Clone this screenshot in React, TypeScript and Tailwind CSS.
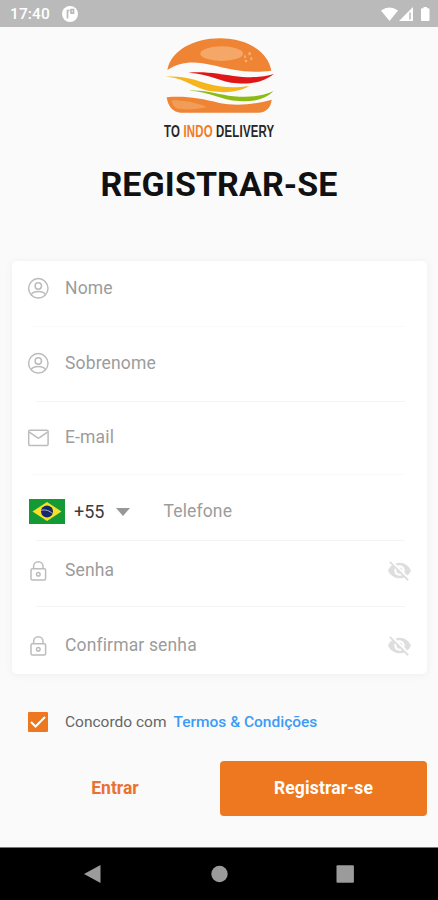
import type { ReactNode } from "react";

const UserIcon = () => (
  <svg width="22" height="22" viewBox="0 0 22 22" fill="none" stroke="#bcbcbc" strokeWidth="1.5">
    <circle cx="11.300" cy="11.300" r="9.700" />
    <circle cx="11.300" cy="9" r="3.2" />
    <path d="M4.300 17.800c1-2.500 3.600-3.200 7-3.200s6 .7 7 3.200" />
  </svg>
);

const MailIcon = () => (
  <svg width="22" height="22" viewBox="0 0 22 22" fill="none" stroke="#bcbcbc" strokeWidth="1.5">
    <rect x="1.700" y="4.200" width="19.400" height="15.200" rx="1.2" />
    <path d="M2.300 6.100l8 5.600q1.100.8 2.200 0l8-5.600" />
  </svg>
);

const LockIcon = () => (
  <svg width="22" height="22" viewBox="0 0 22 22" fill="none" stroke="#bcbcbc" strokeWidth="1.5">
    <rect x="4" y="8.800" width="14.600" height="11.200" rx="1.5" />
    <path d="M6.600 8.800V6.400a4.700 4.700 0 0 1 9.400 0v2.400" />
    <circle cx="11.300" cy="14.2" r="1.8" />
  </svg>
);

const EyeOffIcon = () => (
  <svg width="25" height="25" viewBox="0 0 24 24" fill="#dedede">
    <path d="M12 7c2.76 0 5 2.24 5 5 0 .65-.13 1.26-.36 1.83l2.92 2.92c1.51-1.26 2.7-2.89 3.43-4.75-1.73-4.39-6-7.5-11-7.5-1.4 0-2.74.25-3.98.7l2.16 2.16C10.74 7.13 11.35 7 12 7zM2 4.27l2.28 2.28.46.46A11.8 11.8 0 0 0 1 12c1.73 4.39 6 7.5 11 7.5 1.55 0 3.03-.3 4.38-.84l.42.42L19.73 22 21 20.73 3.27 3 2 4.27zM7.53 9.8l1.55 1.55c-.05.21-.08.43-.08.65 0 1.66 1.34 3 3 3 .22 0 .44-.03.65-.08l1.55 1.55c-.67.33-1.41.53-2.2.53-2.76 0-5-2.24-5-5 0-.79.2-1.53.53-2.2zm4.31-.78l3.15 3.15.02-.16c0-1.66-1.34-3-3-3l-.17.01z" />
  </svg>
);

const Flag = () => (
  <svg width="36" height="25" viewBox="0 0 36 25">
    <rect width="36" height="25" fill="#149a35" />
    <path d="M3.500 12.500L18 3l14.500 9.500L18 22z" fill="#f8e02a" />
    <circle cx="18" cy="12.500" r="6" fill="#16296b" />
    <path d="M12.300 11.300c4-1 8.500.3 11.200 3.400" fill="none" stroke="#a9bdd8" strokeWidth="1" />
  </svg>
);

const Logo = () => (
  <svg width="130" height="115" viewBox="0 0 390 345" role="img">
    <path d="M37 120C48 62 115 25 195 25c84 0 145 42 154 97-70 9-118-2-174-16-56-13-96-13-138 14z" fill="#ee8434" />
    <ellipse cx="200" cy="71" rx="64" ry="22" fill="#f5a767" />
    <g fill="#f6b27c">
      <ellipse cx="284" cy="71" rx="4" ry="5" />
      <ellipse cx="270" cy="80" rx="3" ry="4" />
      <ellipse cx="289" cy="86" rx="3" ry="5" />
      <ellipse cx="273" cy="93" rx="4" ry="4" />
    </g>
    <path d="M100 128c60-4 95 5 135 10 50 6 84 5 122-6-29 22-65 32-110 28-51-3-83-29-147-32z" fill="#df1718" />
    <path d="M31 140c56-4 89 10 130 22 45 12 78 12 122 6-29 17-67 22-113 16-54-9-82-42-139-44z" fill="#f6b51d" />
    <path d="M102 182c54-3 91 13 133 17 47 4 83 1 121-16-25 25-60 33-104 30-55-3-91-29-150-31z" fill="#8dbb16" />
    <path d="M35 202c55-5 102 3 158 17 54 10 105 4 157-10-2 23-16 38-40 39H77c-25-1-38-20-42-46z" fill="#ee8434" />
    <path d="M50 211c37 0 72 6 105 20-30 9-71 9-91 4-8-4-12-14-14-24z" fill="#f29d57" />
    <text
      transform="translate(27 320) scale(.7 1)"
      fontFamily="'Liberation Sans', sans-serif"
      fontWeight="700"
      fontSize="49"
      textLength="472"
      fill="#262626"
    >
      TO <tspan fill="#f07a25">INDO</tspan> DELIVERY
    </text>
  </svg>
);

const StatusBar = () => (
  <header className="flex h-[27px] shrink-0 items-center bg-[#bababa] pt-px pl-[10px] pr-[8px] text-white">
    <span className="pt-px text-[15.500px] font-medium leading-none tracking-[0.1px]">17:40</span>
    <svg className="ml-3" width="16" height="16" viewBox="0 0 16 16">
      <circle cx="8" cy="8" r="8" fill="#fff" />
      <path d="M5.500 12.500V4.500H7.500M9 3.700h2.500v3.500H9z" fill="none" stroke="#bababa" strokeWidth="1.700" />
    </svg>
    <svg className="ml-auto" width="50" height="16" viewBox="0 0 50 16" fill="#fff">
      <path d="M1 4.500Q9.500-1.500 18 4.500L9.500 15z" />
      <path d="M33 1v14H19z" />
      <path d="M30 6.500v7" stroke="#bababa" strokeWidth="1.500" />
      <path d="M43.500 1h3.500v1.200h1.500q1 0 1 1V14q0 1-1 1h-6.500q-1 0-1-1V3.200q0-1 1-1h1.500z" />
    </svg>
  </header>
);

type FieldProps = {
  icon: ReactNode;
  label: string;
  className: string;
  secret?: boolean;
};

const Field = ({ icon, label, className, secret }: FieldProps) => (
  <div className={`flex items-center pl-[15px] pr-[15px] ${className}`}>
    {icon}
    <span className="ml-4 text-[17.500px] tracking-[0.15px] text-[#9c9c9c]">{label}</span>
    {secret && (
      <span className="ml-auto">
        <EyeOffIcon />
      </span>
    )}
  </div>
);

const Divider = ({ faint }: { faint?: boolean }) => (
  <div className={`mr-[22px] h-px ${faint ? "ml-[18px] bg-[#fafafa]" : "ml-6 bg-[#f4f4f4]"}`} />
);

export default function App() {
  return (
    <div className="flex h-[900px] w-[438px] flex-col overflow-hidden bg-[#fafafa] font-['Roboto',sans-serif]">
      <StatusBar />

      <main className="flex flex-1 flex-col">
        <div className="flex justify-center pl-[2px] pt-[3px]">
          <Logo />
        </div>
        <h1 className="mt-[19px] text-center text-[34px] font-bold leading-10 tracking-[0.1px] text-[#111]">
          REGISTRAR-SE
        </h1>

        <section className="ml-3 mr-[11px] mt-[57px] rounded-[5px] bg-white shadow-[0_1px_10px_rgba(0,0,0,0.05)]">
          <Field icon={<UserIcon />} label="Nome" className="h-[65px] pb-[11px]" />
          <Divider faint />
          <Field icon={<UserIcon />} label="Sobrenome" className="h-[74px] pb-[2px]" />
          <Divider />
          <Field icon={<MailIcon />} label="E-mail" className="h-[72px] pb-[2px]" />
          <Divider faint />
          <div className="flex h-[65px] items-center pl-[17px] pt-[8px]">
            <Flag />
            <span className="ml-[9px] text-[18px] text-[#3c3c3c]">+55</span>
            <svg className="ml-3" width="14" height="8" viewBox="0 0 14 8">
              <path d="M0 0h14L7 8z" fill="#989898" />
            </svg>
            <span className="ml-[33px] text-[17.500px] tracking-[0.15px] text-[#9c9c9c]">Telefone</span>
          </div>
          <Divider />
          <Field icon={<LockIcon />} label="Senha" className="h-[65px] pb-[6px]" secret />
          <Divider />
          <Field icon={<LockIcon />} label="Confirmar senha" className="h-[67px] pt-[10px]" secret />
        </section>

        <div className="mt-[38px] flex h-5 items-center pl-7">
          <span className="flex size-5 items-center justify-center rounded-[1px] bg-[#ee7820]">
            <svg width="16" height="12" viewBox="0 0 16 12" fill="none" stroke="#fff" strokeWidth="2">
              <path d="M1 6l4.500 4.500L15 1" />
            </svg>
          </span>
          <span className="ml-[17px] pt-[2px] text-[15.500px] text-[#666]">Concordo com</span>
          <a href="#" className="ml-[7px] pt-[2px] text-[15.500px] font-medium text-[#3d9bf5]">
            Termos &amp; Condições
          </a>
        </div>

        <div className="mt-[29px] flex px-[11px]">
          <button className="h-[55px] w-[209px] pr-px text-[17.500px] font-bold text-[#eb7130]">Entrar</button>
          <button className="h-[55px] flex-1 rounded-[4px] bg-[#ee7820] text-[17.500px] font-bold tracking-[0.15px] text-white">
            Registrar-se
          </button>
        </div>
      </main>

      <nav className="flex h-[53px] shrink-0 items-center border-t border-[#777] bg-black pl-[83px]">
        <svg width="272" height="18" viewBox="0 0 272 18" fill="#9b9b9b">
          <path d="M1 9L17.500 0v18z" />
          <circle cx="136.500" cy="9" r="8.200" />
          <rect x="253.500" y=".3" width="17.400" height="17.400" rx="1" />
        </svg>
      </nav>
    </div>
  );
}
